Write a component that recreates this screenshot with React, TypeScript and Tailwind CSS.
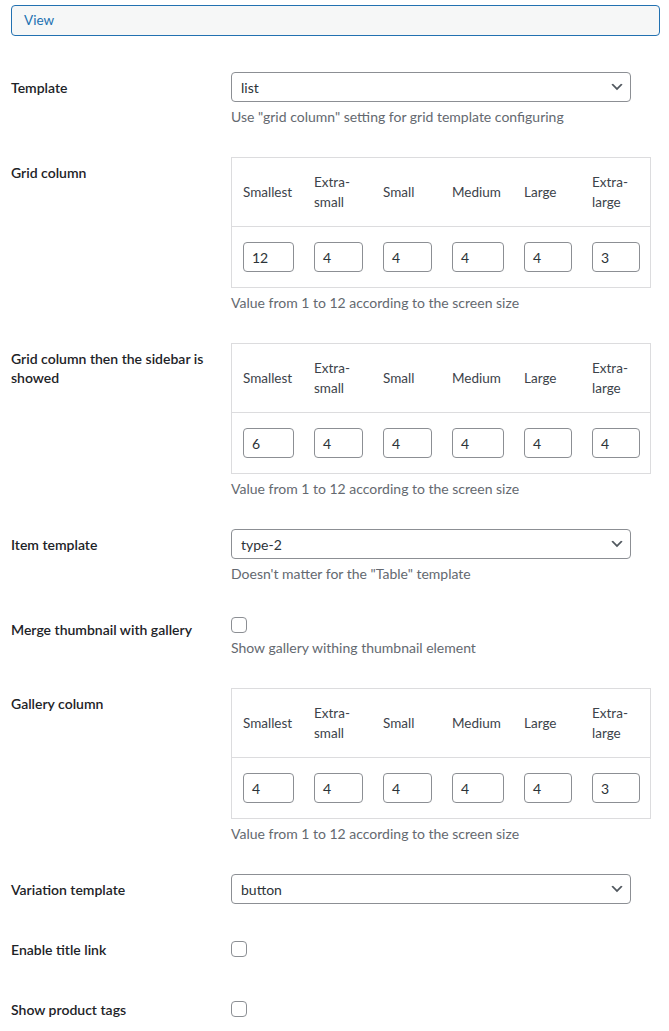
const sizes = ["Smallest", "Extra-small", "Small", "Medium", "Large", "Extra-large"];

function Chevron() {
  return (
    <svg className="w-[16px] h-[16px]" viewBox="0 0 20 20" fill="#50575e">
      <path d="M5 6l5 5 5-5 2 1-7 7-7-7 2-1z" />
    </svg>
  );
}

function Select({ value }: { value: string }) {
  return (
    <div className="w-[400px] h-[30px] border border-[#8c8f94] rounded-[4px] bg-white flex items-center justify-between pl-[9px] pr-[5px] text-[14px] text-[#2c3338]">
      <span>{value}</span>
      <Chevron />
    </div>
  );
}

function Checkbox() {
  return <div className="w-[16px] h-[16px] border border-[#8c8f94] rounded-[4px] bg-white" />;
}

function Desc({ children, className = "mt-[5px]" }: { children: React.ReactNode; className?: string }) {
  return <p className={className + " leading-[20px] text-[14px] text-[#646970]"}>{children}</p>;
}

function ColumnTable({ values }: { values: string[] }) {
  return (
    <div className="w-fit border border-[#dcdcde] text-[13.5px] text-[#3c434a]">
      <div className="grid grid-cols-[71px_69px_69px_72px_68px_68px] pl-[1px]">
        {sizes.map((s) => (
          <div key={s} className="px-[10px] h-[68px] flex items-center leading-[20px]">
            {s.startsWith("Extra-") ? (
              <span>Extra-<br />{s.slice(6)}</span>
            ) : (
              s
            )}
          </div>
        ))}
      </div>
      <div className="grid grid-cols-[71px_69px_69px_72px_68px_68px] pl-[1px] border-t border-[#dcdcde]">
        {values.map((v, i) => (
          <div key={i} className="px-[10px] h-[60px] flex items-center">
            <div className="w-full h-[30px] border border-[#8c8f94] rounded-[4px] bg-white flex items-center px-[8px] text-[14px] text-[#2c3338]">{v}</div>
          </div>
        ))}
      </div>
    </div>
  );
}

function Row({ label, children }: { label: string; children: React.ReactNode }) {
  return (
    <div className="flex">
      <div className="w-[210px] shrink-0 pr-[10px] pt-[21px] pb-[19px] text-[14px] font-semibold leading-[19px] text-[#1d2327]">{label}</div>
      <div className="flex-1 px-[10px] py-[15px]">{children}</div>
    </div>
  );
}

export default function App() {
  return (
    <div className="bg-white min-h-screen pl-[11px] pr-[9px] pt-[5px] text-[13px] text-[#1d2327]" style={{ fontFamily: "Lato, 'Noto Sans', sans-serif" }}>
      <div className="h-[31px] border border-[#2271b1] rounded-[4px] bg-[#f6f7f7] flex items-center px-[12px] text-[#2271b1] text-[13.5px]">View</div>
      <div className="mt-[21px]">
        <Row label="Template">
          <Select value="list" />
          <Desc>Use "grid column" setting for grid template configuring</Desc>
        </Row>
        <Row label="Grid column">
          <ColumnTable values={["12", "4", "4", "4", "4", "3"]} />
          <Desc>Value from 1 to 12 according to the screen size</Desc>
        </Row>
        <Row label="Grid column then the sidebar is showed">
          <ColumnTable values={["6", "4", "4", "4", "4", "4"]} />
          <Desc>Value from 1 to 12 according to the screen size</Desc>
        </Row>
        <Row label="Item template">
          <Select value="type-2" />
          <Desc>Doesn't matter for the "Table" template</Desc>
        </Row>
        <Row label="Merge thumbnail with gallery">
          <div className="h-[20px] pt-[3px]"><Checkbox /></div>
          <Desc className="mt-[4px]">Show gallery withing thumbnail element</Desc>
        </Row>
        <Row label="Gallery column">
          <ColumnTable values={["4", "4", "4", "4", "4", "3"]} />
          <Desc>Value from 1 to 12 according to the screen size</Desc>
        </Row>
        <Row label="Variation template">
          <Select value="button" />
        </Row>
        <Row label="Enable title link">
          <div className="h-[30px] flex items-center"><Checkbox /></div>
        </Row>
        <Row label="Show product tags">
          <div className="h-[30px] flex items-center"><Checkbox /></div>
        </Row>
      </div>
    </div>
  );
}
